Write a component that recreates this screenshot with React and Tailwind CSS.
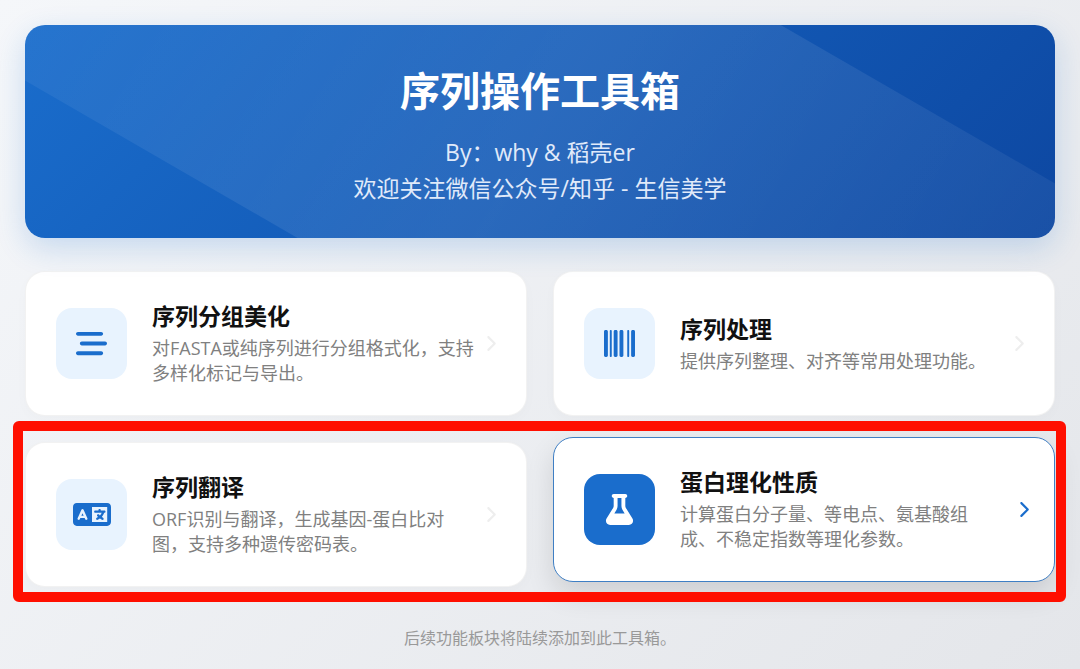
import React from 'react';
import { FaBarsStaggered, FaBarcode, FaLanguage, FaFlask, FaChevronRight } from 'react-icons/fa6';

const rows = [
  [
    {
      id: 'format',
      icon: FaBarsStaggered,
      title: '序列分组美化',
      desc: '对FASTA或纯序列进行分组格式化，支持\n多样化标记与导出。',
    },
    {
      id: 'process',
      icon: FaBarcode,
      title: '序列处理',
      desc: '提供序列整理、对齐等常用处理功能。',
    },
  ],
  [
    {
      id: 'translate',
      icon: FaLanguage,
      iconSize: 'h-[31px] w-[38px]',
      title: '序列翻译',
      desc: 'ORF识别与翻译，生成基因-蛋白比对\n图，支持多种遗传密码表。',
    },
    {
      id: 'protein',
      icon: FaFlask,
      title: '蛋白理化性质',
      desc: '计算蛋白分子量、等电点、氨基酸组\n成、不稳定指数等理化参数。',
      active: true,
    },
  ],
];

function ToolCard({ tool }) {
  const Icon = tool.icon;
  return (
    <a
      href={'#' + tool.id}
      className={`flex items-center rounded-[20px] border bg-white py-[29px] pr-[27px] pl-[30px] ${tool.active ? '-translate-y-[5px] border-[#3f7fc4] shadow-[0_12px_28px_rgba(0,0,0,0.12)]' : 'border-black/5 shadow-[0_4px_14px_rgba(0,0,0,0.02)]'}`}
    >
      <div
        className={`flex size-[71px] shrink-0 items-center justify-center rounded-2xl ${tool.active ? 'bg-[#1a6dcc] text-white' : 'bg-[#e8f3fe] text-[#1a6dcc]'}`}
      >
        <Icon className={tool.iconSize || 'size-[31px]'} />
      </div>
      <div className="ml-[25px] min-w-0 flex-1">
        <h2 className="mb-[5px] text-[23px] leading-[30px] font-bold text-[#111]">{tool.title}</h2>
        <p className="text-[18px] leading-[25px] whitespace-pre-line text-[#808080]">{tool.desc}</p>
      </div>
      <FaChevronRight
        size={17}
        className={`shrink-0 ${tool.active ? 'translate-x-[5px] text-[#1a6dcc]' : 'text-[#eeeeee]'}`}
      />
    </a>
  );
}

export default function App() {
  return (
    <div className="min-h-screen overflow-hidden bg-linear-135 from-[#f5f7fa] to-[#e4e6ea] px-[25px] pt-[25px] pb-5 font-['Open_Sans','Noto_Sans_CJK_SC',sans-serif]">
      {/* Banner */}
      <header className="relative overflow-hidden rounded-[20px] bg-linear-135 from-[#1a6dcc] to-[#0d47a1] pt-9 pb-8 text-center shadow-[0_10px_30px_rgba(26,109,204,0.2)]">
        <div className="absolute -inset-1/2 rotate-30 bg-linear-to-r from-white/0 via-white/10 to-white/0" />
        <div className="relative">
          <h1 className="mb-[13px] text-[40px] leading-[60px] font-bold text-white">序列操作工具箱</h1>
          <p className="text-[23px] leading-9 text-[#e0eafa]">
            By：why &amp; 稻壳er
            <br />
            欢迎关注微信公众号/知乎 - 生信美学
          </p>
        </div>
      </header>

      <main className="mt-[33px] space-y-[26px]">
        <section className="grid grid-cols-2 gap-[26px]">
          {rows[0].map(tool => (
            <ToolCard key={tool.id} tool={tool} />
          ))}
        </section>

        {/* Highlighted row */}
        <section className="relative grid grid-cols-2 gap-[26px]">
          {rows[1].map(tool => (
            <ToolCard key={tool.id} tool={tool} />
          ))}
          <div className="pointer-events-none absolute -top-[21px] -right-[11px] -bottom-[15px] -left-3 rounded-md border-10 border-[#ff0f00]" />
        </section>
      </main>

      <footer className="mt-[39px] text-center text-[16px] leading-6 text-[#999]">
        后续功能板块将陆续添加到此工具箱。
      </footer>
    </div>
  );
}
